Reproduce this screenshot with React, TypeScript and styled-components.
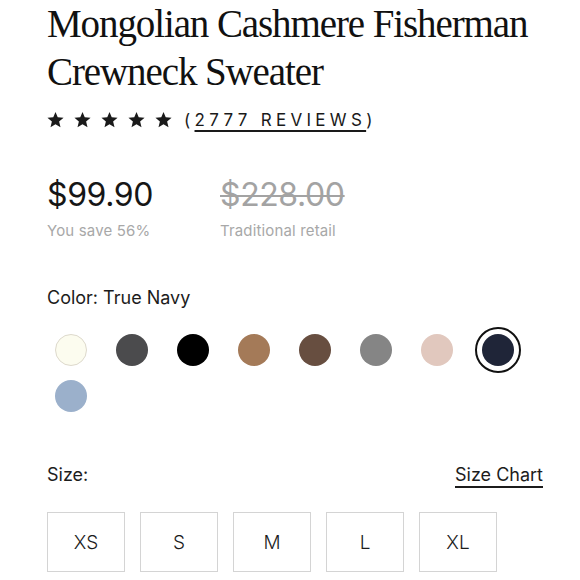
import React from "react";
import styled, { createGlobalStyle } from "styled-components";

const Global = createGlobalStyle`
  html, body { margin: 0; padding: 0; background: #fff; }
  body { font-family: "Inter", "Liberation Sans", sans-serif; color: #1a1a1a; }
  * { box-sizing: border-box; }
`;

const Page = styled.div`
  width: 580px;
  height: 580px;
  overflow: hidden;
  padding: 0 37px 0 47px;
  display: flex;
  flex-direction: column;
`;

const Title = styled.h1`
  margin: 0;
  font-family: "Liberation Serif", "Times New Roman", serif;
  font-weight: 400;
  font-size: 39px;
  line-height: 48px;
  letter-spacing: -1.1px;
  color: #111;
`;

const RatingRow = styled.div`
  margin-top: 14px;
  height: 20px;
  display: flex;
  align-items: center;
`;

const Stars = styled.div`
  display: flex;
  gap: 10px;
  margin-right: 12px;
`;

const Reviews = styled.div`
  font-size: 17px;
  letter-spacing: 4.3px;
  color: #1a1a1a;
  line-height: 20px;
  white-space: nowrap;
`;

const ReviewLink = styled.span`
  text-decoration: underline;
  text-decoration-thickness: 1.5px;
  text-underline-offset: 4px;
`;

const PriceGrid = styled.div`
  margin-top: 45px;
  display: grid;
  grid-template-columns: 173px auto;
`;

const PriceCol = styled.div`
  display: flex;
  flex-direction: column;
`;

const Price = styled.div<{ $old?: boolean }>`
  font-size: 32px;
  line-height: 40px;
  font-weight: 400;
  letter-spacing: -0.4px;
  color: ${(p) => (p.$old ? "#a3a3a3" : "#161616")};
  text-decoration: ${(p) => (p.$old ? "line-through" : "none")};
  text-decoration-thickness: 2px;
`;

const PriceNote = styled.div`
  margin-top: 6px;
  font-size: 15px;
  line-height: 20px;
  letter-spacing: 0.15px;
  color: #a8a8a8;
`;

const Label = styled.div`
  font-size: 18px;
  line-height: 22px;
  color: #1c1c1c;
`;

const ColorLabel = styled(Label)`
  margin-top: 46px;
`;

const Swatches = styled.div`
  margin-top: 18px;
  display: flex;
  flex-wrap: wrap;
  column-gap: 13px;
  width: 480px;
`;

const SwatchSlot = styled.div`
  width: 48px;
  height: 46px;
  display: flex;
  align-items: center;
  justify-content: center;
`;

const Ring = styled.div<{ $selected?: boolean }>`
  width: 46px;
  height: 46px;
  border-radius: 50%;
  border: 2px solid ${(p) => (p.$selected ? "#111" : "transparent")};
  display: flex;
  align-items: center;
  justify-content: center;
`;

const Dot = styled.div<{ $color: string; $outlined?: boolean }>`
  width: 32px;
  height: 32px;
  border-radius: 50%;
  background: ${(p) => p.$color};
  border: ${(p) => (p.$outlined ? "1px solid #ddd9cc" : "none")};
`;

const SizeHeader = styled.div`
  margin-top: 45px;
  display: flex;
  justify-content: space-between;
  align-items: baseline;
`;

const SizeChart = styled.span`
  font-size: 18px;
  line-height: 22px;
  color: #1c1c1c;
  text-decoration: underline;
  text-decoration-thickness: 1.5px;
  text-underline-offset: 5px;
`;

const SizeRow = styled.div`
  margin-top: 26px;
  display: flex;
  gap: 15px;
`;

const SizeBox = styled.button`
  width: 78px;
  height: 60px;
  background: #fff;
  border: 1.5px solid #d4d4d4;
  font-family: "Inter", "Liberation Sans", sans-serif;
  font-size: 19px;
  font-weight: 300;
  color: #1c1c1c;
  display: flex;
  align-items: center;
  justify-content: center;
  padding: 0;
`;

const Star = () => (
  <svg width="17" height="16" viewBox="0 0 24 23">
    <path
      d="M12 0l3.2 7.6 8.4 0.7-6.4 5.5 2 8.2L12 17.6 4.8 22l2-8.2L0.4 8.3l8.4-0.7z"
      fill="#1a1a1a"
    />
  </svg>
);

const colors = [
  { c: "#fcfcef", outlined: true },
  { c: "#4b4b4d" },
  { c: "#000000" },
  { c: "#a47a58" },
  { c: "#674e40" },
  { c: "#858585" },
  { c: "#e1c8be" },
  { c: "#1f2538", selected: true },
  { c: "#9bb0cb" },
];

const sizes = ["XS", "S", "M", "L", "XL"];

export default function App() {
  return (
    <>
      <Global />
      <Page>
        <Title>Mongolian Cashmere Fisherman Crewneck Sweater</Title>
        <RatingRow>
          <Stars>
            {[0, 1, 2, 3, 4].map((i) => (
              <Star key={i} />
            ))}
          </Stars>
          <Reviews>
            (<ReviewLink>2777 REVIEWS</ReviewLink>)
          </Reviews>
        </RatingRow>
        <PriceGrid>
          <PriceCol>
            <Price>$99.90</Price>
            <PriceNote>You save 56%</PriceNote>
          </PriceCol>
          <PriceCol>
            <Price $old>$228.00</Price>
            <PriceNote>Traditional retail</PriceNote>
          </PriceCol>
        </PriceGrid>
        <ColorLabel>Color: True Navy</ColorLabel>
        <Swatches>
          {colors.map((s, i) => (
            <SwatchSlot key={i}>
              <Ring $selected={s.selected}>
                <Dot $color={s.c} $outlined={s.outlined} />
              </Ring>
            </SwatchSlot>
          ))}
        </Swatches>
        <SizeHeader>
          <Label>Size:</Label>
          <SizeChart>Size Chart</SizeChart>
        </SizeHeader>
        <SizeRow>
          {sizes.map((s) => (
            <SizeBox key={s}>{s}</SizeBox>
          ))}
        </SizeRow>
      </Page>
    </>
  );
}
